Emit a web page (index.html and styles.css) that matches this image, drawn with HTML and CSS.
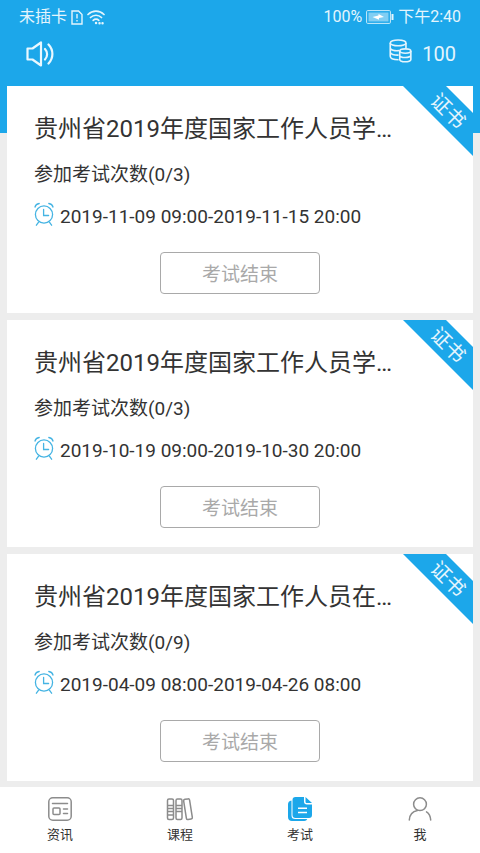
FILE: index.html
```html
<!DOCTYPE html>
<html lang="zh-CN">
<head>
<meta charset="utf-8">
<meta name="viewport" content="width=device-width, initial-scale=1">
<title>考试</title>
<link rel="stylesheet" href="styles.css">
</head>
<body>
<svg class="defs" width="0" height="0" aria-hidden="true">
  <symbol id="clock" viewBox="0 0 20 24">
    <g fill="none" stroke="#45b4e3" stroke-width="1.3" stroke-linecap="round">
      <circle cx="10" cy="12.5" r="8.6"/>
      <path d="M9.6 7.5v6h5M1 5C1.5 3 3 1.800 5.200 1.500M19 5C18.500 3 17 1.800 14.800 1.500M4.600 20.200l-2.200 3M15.400 20.200l2.200 3"/>
    </g>
  </symbol>
  <symbol id="ribbon" viewBox="0 0 70 70">
    <path fill="#1ca7ea" d="M0 0h43l27 27v43z"/>
  </symbol>
</svg>
<header class="top">
  <div class="status">
    <div class="status-group">
      <span>未插卡</span>
      <svg width="12" height="15" viewBox="0 0 12 15" fill="none" stroke="#e4f5fd" stroke-width="1.4"><path d="M1 1h6.500l3.500 3.500V14H1zM6 4v4.500M6 10v1.600"/></svg>
      <svg width="18" height="15" viewBox="0 0 18 15" fill="none" stroke="#e4f5fd" stroke-width="1.700" stroke-linecap="round"><path d="M1 4.500C5.500 0 12.500 0 17 4.500M3.500 7.500c3-3 8-3 11 0M6.200 10.300c1.600-1.600 4-1.600 5.600 0"/><path d="M9 13h.1M12.500 13.200h.1M15.500 13.200h.1" stroke-width="2.400"/></svg>
    </div>
    <div class="status-group">
      <span>100%</span>
      <svg width="28" height="14" viewBox="0 0 28 14"><rect x=".6" y=".6" width="23.800" height="12.800" rx="1" fill="none" stroke="#cdecfb"/><rect x="2.500" y="2.500" width="20" height="9" fill="#81cef3"/><path d="M6.500 7l6-1.500V4l5.500 3-5 1v1.800z" fill="#fff"/><path d="M26.500 4v6" stroke="#e4f5fd" stroke-width="2"/></svg>
      <span>下午2:40</span>
    </div>
  </div>
  <div class="toolbar">
    <button class="sound" type="button" aria-label="声音">
      <svg width="28" height="26" viewBox="0 0 28 26" fill="none" stroke="#e9f8ff" stroke-width="2.200" stroke-linecap="round" stroke-linejoin="round"><path d="M1.500 7.500h5L15 1.500v23l-8.500-6h-5zM19 8c2.800 3 2.800 7.500 0 10.500M22.500 3.500c5.200 5.500 5.200 13.500 0 19"/></svg>
    </button>
    <div class="coins">
      <svg width="23" height="25" viewBox="0 0 24 26" fill="none" stroke="#e4f5fd" stroke-width="1.700"><ellipse cx="9.500" cy="4" rx="8.200" ry="3"/><path d="M1.300 4v14c0 2.200 4 3.600 8.700 3.600M17.700 4v5.500M1.300 9c0 2.500 4.800 3.600 9.200 3M1.300 13.500c0 2.300 4 3.500 8.700 3.300"/><ellipse cx="17" cy="12.500" rx="5.800" ry="2.300"/><path d="M11.200 12.500v8.800c0 3.200 11.600 3.200 11.600 0v-8.800M11.200 16.800c0 3.200 11.600 3.200 11.600 0"/></svg>
      <span>100</span>
    </div>
  </div>
</header>
<main class="exams">
  <article class="card">
    <div class="ribbon"><svg width="70" height="70"><use href="#ribbon"/></svg><span>证书</span></div>
    <h2>贵州省2019年度国家工作人员学…</h2>
    <p>参加考试次数(0/3)</p>
    <p class="date"><svg width="20" height="24"><use href="#clock"/></svg><span>2019-11-09 09:00-2019-11-15 20:00</span></p>
    <button class="action" type="button">考试结束</button>
  </article>
  <article class="card">
    <div class="ribbon"><svg width="70" height="70"><use href="#ribbon"/></svg><span>证书</span></div>
    <h2>贵州省2019年度国家工作人员学…</h2>
    <p>参加考试次数(0/3)</p>
    <p class="date"><svg width="20" height="24"><use href="#clock"/></svg><span>2019-10-19 09:00-2019-10-30 20:00</span></p>
    <button class="action" type="button">考试结束</button>
  </article>
  <article class="card">
    <div class="ribbon"><svg width="70" height="70"><use href="#ribbon"/></svg><span>证书</span></div>
    <h2>贵州省2019年度国家工作人员在…</h2>
    <p>参加考试次数(0/9)</p>
    <p class="date"><svg width="20" height="24"><use href="#clock"/></svg><span>2019-04-09 08:00-2019-04-26 08:00</span></p>
    <button class="action" type="button">考试结束</button>
  </article>
</main>
<nav class="tabs">
  <a href="#news">
    <svg width="26" height="24" viewBox="0 0 26 24" fill="none" stroke="#8c8c8c" stroke-width="1.500" stroke-linecap="round"><rect x="1.800" y=".8" width="22.400" height="22.400" rx="4"/><path d="M5.500 6.500h15M16.500 12h4M16.500 16.500h4"/><rect x="6" y="11" width="7" height="6.500" rx="1"/></svg>
    <span>资讯</span>
  </a>
  <a href="#courses">
    <svg width="28" height="24" viewBox="0 0 28 24" fill="none" stroke="#8c8c8c" stroke-width="1.500"><rect x="1.500" y="2" width="6" height="20.500" rx="1.500"/><rect x="10" y="2" width="6" height="20.500" rx="1.500"/><rect x="-3" y="-10.200" width="6" height="20.400" rx="1.500" transform="translate(22 12.200) rotate(-9)"/><path d="M1.500 8.500h6M1.500 11.500h6M1.500 14.500h6M1.500 18h6M10 8.500h6M10 11.500h6M10 14.500h6"/></svg>
    <span>课程</span>
  </a>
  <a href="#exams" aria-current="page">
    <svg width="26" height="24" viewBox="0 0 26 24"><path fill="#1ca7ea" d="M4.500 3.500v14.800c0 2.600 1.200 3.800 3.800 3.800h12c-.6 1.300-1.500 1.900-3 1.900H5c-2.500 0-4-1.500-4-4V7.500c0-2.200 1.200-3.600 3.500-4z"/><path fill="#1ca7ea" d="M8.500 0H17v4.500C17 6.500 18 7.500 20 7.500h5V18c0 2-1 3-3 3H8.500c-2 0-3-1-3-3V3c0-2 1-3 3-3zM18.500 0L25 6h-5c-1 0-1.500-.5-1.500-1.500z"/><path d="M11 11.200h9M11 15.500h9" stroke="#fff" stroke-width="1.500"/></svg>
    <span>考试</span>
  </a>
  <a href="#me">
    <svg width="26" height="24" viewBox="0 0 26 24" fill="none" stroke="#8c8c8c" stroke-width="1.500" stroke-linecap="round"><circle cx="13" cy="7.200" r="6.400"/><path d="M10.500 13.500C5.500 14.500 2.500 18 2.300 23M19.500 14.800c2.600 1.700 4 4.500 4.200 8.200"/></svg>
    <span>我</span>
  </a>
</nav>
</body>
</html>
```
FILE: styles.css
```css
* {
  box-sizing: border-box;
}

body {
  margin: 0;
  min-height: 100vh;
  display: flex;
  flex-direction: column;
  background: #ededed;
  color: #333;
  font-family: Roboto, "Noto Sans CJK SC", sans-serif;
}

svg {
  display: block;
  flex: none;
}

.defs {
  position: absolute;
}

button {
  font: inherit;
  margin: 0;
  padding: 0;
  background: none;
  border: 0;
}

.top {
  background: #1ca7ea;
  color: #e4f5fd;
}

.status {
  display: flex;
  justify-content: space-between;
  padding: 5px 19px 0;
  font-size: 16px;
  line-height: 24px;
}

.status-group {
  display: flex;
  align-items: center;
  gap: 4px;
}

.toolbar {
  display: flex;
  justify-content: space-between;
  align-items: center;
  height: 57px;
  padding: 0 24px 8px 26px;
}

.coins {
  display: flex;
  align-items: center;
  gap: 10px;
  font-size: 20px;
  line-height: 24px;
}

.coins svg {
  margin-top: -4px;
}

.exams {
  flex: 1;
  display: flex;
  flex-direction: column;
  gap: 7px;
  padding: 0 7px 5px;
  background: linear-gradient(#1ca7ea, #1ca7ea) top / 100% 47px no-repeat;
}

.card {
  position: relative;
  display: flex;
  flex-direction: column;
  padding: 27px 27px 19px;
  background: #fff;
}

.card h2 {
  margin: 0 0 18px;
  font-size: 24px;
  font-weight: 400;
  line-height: 32px;
  white-space: nowrap;
}

.card p {
  margin: 0 0 18px;
  font-size: 19px;
  line-height: 24px;
}

.card .date {
  display: flex;
  gap: 6px;
  margin-bottom: 23px;
}

.date svg {
  margin-top: -3px;
}

.action {
  align-self: center;
  width: 160px;
  height: 42px;
  padding-bottom: 2px;
  border: 1px solid #a9a9a9;
  border-radius: 4px;
  color: #a9a9a9;
  font-size: 19px;
}

.ribbon {
  position: absolute;
  top: 0;
  right: 0;
}

.ribbon span {
  position: absolute;
  top: 13px;
  right: 5px;
  color: #e4f5fd;
  font-size: 20px;
  line-height: 24px;
  white-space: nowrap;
  transform: rotate(45deg);
}

.tabs {
  position: sticky;
  bottom: 0;
  display: grid;
  grid-template-columns: repeat(4, 1fr);
  height: 66px;
  padding-top: 10px;
  background: #fff;
}

.tabs a {
  display: flex;
  flex-direction: column;
  align-items: center;
  gap: 4px;
  color: #333;
  font-size: 13px;
  line-height: 20px;
  text-decoration: none;
}
```
